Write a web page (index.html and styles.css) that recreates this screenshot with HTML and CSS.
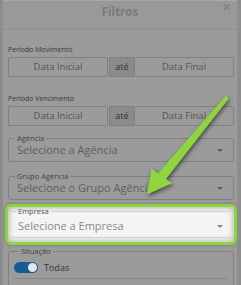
FILE: index.html
```html
<!DOCTYPE html>
<html lang="pt-BR">
<head>
    <meta charset="UTF-8">
    <meta name="viewport" content="width=device-width, initial-scale=1.0">
    <title>Filtros</title>
    <link rel="stylesheet" href="styles.css">
</head>
<body>
    <div class="modal">
        <div class="modal-header">
            <h3>Filtros</h3>
            <span class="close">&times;</span>
        </div>

        <div class="modal-body">
            <label class="period-label">Período Movimento</label>
            <div class="input-group">
                <div class="date-input">Data Inicial</div>
                <div class="addon">até</div>
                <div class="date-input">Data Final</div>
            </div>

            <label class="period-label second">Período Vencimento</label>
            <div class="input-group">
                <div class="date-input">Data Inicial</div>
                <div class="addon">até</div>
                <div class="date-input">Data Final</div>
            </div>

            <fieldset class="select-field">
                <legend>Agência</legend>
                <div class="select">Selecione a Agência<span class="caret"></span></div>
            </fieldset>

            <fieldset class="select-field">
                <legend>Grupo Agência</legend>
                <div class="select">Selecione o Grupo Agência<span class="caret"></span></div>
            </fieldset>

            <div class="highlight">
                <fieldset class="select-field focused">
                    <legend>Empresa</legend>
                    <div class="select">Selecione a Empresa<span class="caret"></span></div>
                </fieldset>
            </div>

            <fieldset class="switch-field">
                <legend>Situação</legend>
                <div class="switch-row">
                    <span class="switch"><span class="knob"></span></span>
                    <span class="switch-label">Todas</span>
                </div>
                <div class="divider"></div>
            </fieldset>
        </div>
    </div>

    <!-- pointer arrow drawn over the form -->
    <svg class="arrow" width="241" height="285" viewBox="0 0 241 285">
        <polygon points="226,95.5 228.8,98.5 166,179 172.5,183 147,194.5 151.5,168.5 158,173.5" fill="#8fd53e"/>
    </svg>
</body>
</html>
```

FILE: styles.css
```css
body {
    margin: 0;
    background-color: #8d8d8d;
    font-family: "Open Sans", "DejaVu Sans", sans-serif;
    height: 285px;
    overflow: hidden;
}
.modal {
    position: relative;
    margin-left: 3px;
    width: 234px;
    height: 285px;
    background-color: #9b9b9b;
    border-top: 1px solid #a9a9a9;
    box-sizing: border-box;
    overflow: hidden;
}
.modal-header {
    height: 28px;
    border-bottom: 1px solid #8f8f8f;
    background-color: #999;
}
.modal-header h3 {
    margin: 0;
    text-align: center;
    font-size: 11.5px;
    font-weight: bold;
    line-height: 21px;
    color: #7a7a7a;
}
.close {
    position: absolute;
    top: -4px;
    right: 6px;
    font-size: 15px;
    line-height: 18px;
    font-weight: bold;
    color: #858585;
}
.modal-body {
    padding: 15px 3px 0 5px;
}
.period-label {
    display: block;
    font-size: 7px;
    line-height: 10px;
    color: #383838;
    margin-bottom: 2px;
}
.period-label.second {
    margin-top: 17px;
}
.input-group {
    display: flex;
    height: 20px;
}
.date-input {
    flex: 0 0 100px;
    box-sizing: border-box;
    border: 1px solid #7f7f7f;
    border-radius: 2px;
    text-align: center;
    font-size: 9.5px;
    line-height: 18px;
    color: #555;
}
.addon {
    flex: 0 0 25px;
    box-sizing: border-box;
    margin-left: 1px;
    border: 1px solid #7f7f7f;
    border-right: none;
    background-color: #8b8b8b;
    text-align: center;
    font-size: 9px;
    line-height: 18px;
    color: #333;
}
.select-field {
    margin: 8px 0 0;
    padding: 0 8px 4px;
    border: 1px solid #7f7f7f;
    border-radius: 3px;
}
.select-field + .select-field {
    margin-top: 10px;
}
.select-field legend,
.switch-field legend {
    margin-left: -2px;
    padding: 0 2px;
    font-size: 7.5px;
    line-height: 9px;
    color: #444;
}
.select {
    position: relative;
    font-size: 11px;
    line-height: 14px;
    color: #5e5e5e;
    white-space: nowrap;
}
.caret {
    position: absolute;
    right: 2px;
    top: 6px;
    border-left: 3px solid transparent;
    border-right: 3px solid transparent;
    border-top: 3px solid #5a5a5a;
}
.highlight {
    position: relative;
    z-index: 1;
    margin: 4px -3px 0;
    padding: 0 0 4px;
    border: 3px solid #8dd43d;
    border-radius: 6px;
    background-color: #f4f4f4;
    box-shadow: inset 0 0 6px rgba(0,0,0,0.35), 0 0 3px rgba(0,0,0,0.3);
}
.select-field.focused {
    margin: 0 2px;
    padding: 3px 6px 4px 7px;
    border-color: #cfcfcf;
    border-left-color: transparent;
    border-right-color: transparent;
}
.focused legend {
    color: #555;
}
.focused .select {
    color: #8a8a8a;
}
.focused .caret {
    border-top-color: #888;
}
.switch-field {
    margin: 2px 0 0;
    padding: 5px 5px 0;
    border: 1px solid #7f7f7f;
    border-radius: 3px;
    height: 60px;
}
.switch-field legend {
    margin-left: 5px;
    color: #3e3e3e;
}
.switch-row {
    display: flex;
    align-items: center;
    height: 13px;
}
.switch {
    display: flex;
    justify-content: flex-end;
    align-items: center;
    width: 24px;
    height: 11px;
    border-radius: 6px;
    background-color: #195a96;
    box-sizing: border-box;
    padding: 0 1px;
}
.knob {
    width: 9px;
    height: 9px;
    border-radius: 50%;
    background-color: #e6e6e6;
}
.switch-label {
    margin-left: 6px;
    font-size: 9px;
    color: #333;
}
.divider {
    margin-top: 4px;
    border-top: 1px solid #878787;
}
.arrow {
    position: absolute;
    top: 0;
    left: 0;
    z-index: 2;
    pointer-events: none;
    filter: drop-shadow(1px 2px 2px rgba(0,0,0,0.55));
}
```
